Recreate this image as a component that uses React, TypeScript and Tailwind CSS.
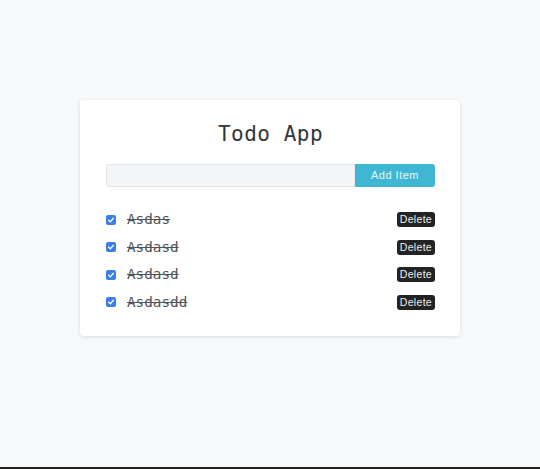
import React, { useState } from 'react';

type Todo = { id: number; text: string; done: boolean };

const initial: Todo[] = [
  { id: 1, text: 'Asdas', done: true },
  { id: 2, text: 'Asdasd', done: true },
  { id: 3, text: 'Asdasd', done: true },
  { id: 4, text: 'Asdasdd', done: true },
];

function Check({ checked, onClick }: { checked: boolean; onClick: () => void }) {
  return (
    <button
      onClick={onClick}
      className={
        'w-[10px] h-[10px] rounded-[2px] flex items-center justify-center shrink-0 ' +
        (checked ? 'bg-[#3b7ee8]' : 'bg-white border border-gray-400')
      }
    >
      {checked && (
        <svg viewBox="0 0 10 10" className="w-[8px] h-[8px]">
          <path d="M2 5.2 L4.2 7.2 L8 2.8" fill="none" stroke="white" strokeWidth="1.6" strokeLinecap="round" strokeLinejoin="round" />
        </svg>
      )}
    </button>
  );
}

export default function App() {
  const [todos, setTodos] = useState<Todo[]>(initial);
  const [text, setText] = useState('');

  const add = () => {
    if (!text.trim()) return;
    setTodos(t => [...t, { id: Date.now(), text, done: false }]);
    setText('');
  };

  return (
    <div className="h-[469px] bg-[#f7f8f9] border-b-2 border-[#222] flex flex-col items-center pt-[100px]">
      <div className="w-[380px] bg-white rounded-[4px] shadow-[0_1px_4px_rgba(0,0,0,0.12)] pl-[26px] pr-[25px] pt-[19px] pb-[26px]">
        <h1
          className="text-center text-[21px] leading-[30px] text-[#33363a] tracking-[0.5px]"
          style={{ fontFamily: '"DejaVu Sans Mono", "Liberation Mono", monospace' }}
        >
          Todo App
        </h1>

        <div className="flex mt-[15px] h-[23px]">
          <input
            value={text}
            onChange={e => setText(e.target.value)}
            className="flex-1 min-w-0 bg-[#f2f6f8] border border-[#dfe5e8] rounded-l-[3px] outline-none px-2 text-[12px]"
          />
          <button
            onClick={add}
            className="w-[80px] bg-[#3fb6d2] rounded-r-[3px] text-[11px] text-[#e6f6fa] tracking-[0.5px]"
            style={{ fontFamily: '"Liberation Sans", Arial, sans-serif' }}
          >
            Add Item
          </button>
        </div>

        <ul className="mt-[25px] flex flex-col gap-[12px]">
          {todos.map(t => (
            <li key={t.id} className="flex items-center h-[15.5px]">
              <Check
                checked={t.done}
                onClick={() => setTodos(ts => ts.map(x => (x.id === t.id ? { ...x, done: !x.done } : x)))}
              />
              <span
                className={'ml-[11px] flex-1 text-[14.3px] text-[#50535a] ' + (t.done ? 'line-through' : '')}
                style={{ fontFamily: '"DejaVu Sans Mono", "Liberation Mono", monospace' }}
              >
                {t.text}
              </span>
              <button
                onClick={() => setTodos(ts => ts.filter(x => x.id !== t.id))}
                className="bg-[#222325] text-[#eee] text-[10.5px] leading-[15px] px-[3px] rounded-[3px] tracking-[0.3px]"
                style={{ fontFamily: '"Liberation Sans", Arial, sans-serif' }}
              >
                Delete
              </button>
            </li>
          ))}
        </ul>
      </div>
    </div>
  );
}
